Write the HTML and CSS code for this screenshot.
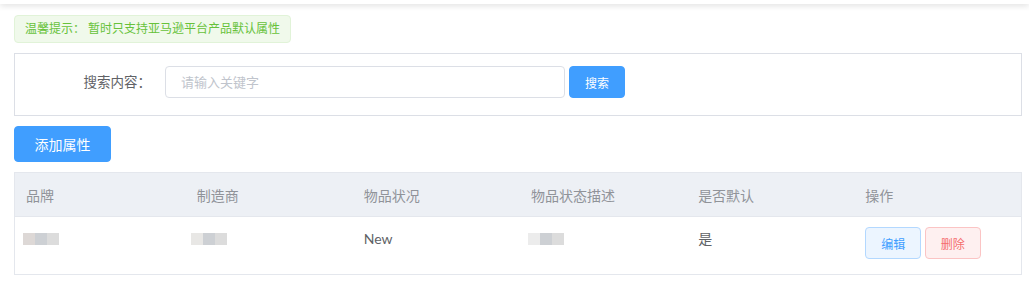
FILE: index.html
```html
<!DOCTYPE HTML>
<html>
<head>
  <meta name="viewport" content="width=device-width, initial-scale=1">
  <title>亚马逊产品默认属性</title>
  <link rel="stylesheet" href="styles.css">
</head>
<body>
  <div class="topbar"></div>

  <div class="page">
    <div class="alert">温馨提示：&nbsp;暂时只支持亚马逊平台产品默认属性</div>

    <div class="search-box">
      <label class="search-label">搜索内容：</label>
      <input class="search-input" type="text" placeholder="请输入关键字">
      <button class="btn btn-primary btn-small">搜索</button>
    </div>

    <button class="btn btn-primary btn-add">添加属性</button>

    <table class="attr-table">
      <thead>
        <tr>
          <th class="col-first">品牌</th>
          <th>制造商</th>
          <th>物品状况</th>
          <th>物品状态描述</th>
          <th>是否默认</th>
          <th>操作</th>
        </tr>
      </thead>
      <tbody>
        <tr>
          <td class="col-first"><span class="masked"><i class="m1"></i><i class="m2"></i><i class="m3"></i></span></td>
          <td><span class="masked shift"><i class="m4"></i><i class="m2"></i><i class="m3"></i></span></td>
          <td>New</td>
          <td><span class="masked"><i class="m5"></i><i class="m2"></i><i class="m3"></i></span></td>
          <td>是</td>
          <td>
            <button class="btn btn-mini btn-edit">编辑</button>
            <button class="btn btn-mini btn-delete">删除</button>
          </td>
        </tr>
      </tbody>
    </table>
  </div>
</body>
</html>
```

FILE: styles.css
```css
body {
  margin: 0;
  font-family: Lato, "Noto Sans CJK SC", sans-serif;
  font-size: 14px;
  color: #606266;
  background-color: #fff;
}

.topbar {
  height: 4px;
  background-color: #fff;
  box-shadow: 0 1px 6px rgba(0,0,0,0.18);
}

.page {
  padding: 11px 7px 0 14px;
}

.alert {
  display: inline-block;
  height: 26px;
  line-height: 26px;
  padding: 0 10px;
  font-size: 12px;
  color: #67c23a;
  background-color: #f0f9eb;
  border: 1px solid #e1f3d8;
  border-radius: 4px;
}

.search-box {
  display: flex;
  align-items: flex-start;
  box-sizing: border-box;
  height: 63px;
  padding-top: 12px;
  margin-top: 10px;
  border: 1px solid #dcdfe6;
}

.search-label {
  width: 136px;
  line-height: 32px;
  padding-right: 14px;
  text-align: right;
  font-size: 13.5px;
  color: #606266;
}

.search-input {
  box-sizing: border-box;
  width: 400px;
  height: 32px;
  padding: 0 15px;
  font-family: inherit;
  font-size: 13px;
  color: #606266;
  border: 1px solid #dcdfe6;
  border-radius: 4px;
  outline: none;
}

.search-input::placeholder {
  color: #c0c4cc;
}

.btn {
  font-family: inherit;
  border-radius: 4px;
  cursor: pointer;
  border: 1px solid transparent;
}

.btn-primary {
  color: #fff;
  background-color: #409eff;
  border-color: #409eff;
}

.btn-small {
  width: 56px;
  height: 32px;
  margin-left: 4px;
  font-size: 12px;
  padding: 0;
}

.btn-add {
  display: block;
  width: 97px;
  height: 36px;
  margin-top: 10px;
  font-size: 14px;
  padding: 0;
}

.attr-table {
  width: 1008px;
  margin-top: 10px;
  border-collapse: collapse;
  border: 1px solid #e4e7ed;
  table-layout: fixed;
}

.attr-table th,
.attr-table td {
  width: 167px;
  padding: 0 0 0 11px;
  text-align: left;
  box-sizing: border-box;
}

.attr-table th.col-first,
.attr-table td.col-first {
  width: 171px;
}

.attr-table th {
  height: 44px;
  font-weight: normal;
  color: #909399;
  background-color: #edf0f5;
  border-bottom: 1px solid #e4e7ed;
}

.attr-table td {
  height: 58px;
  padding-top: 10px;
  vertical-align: top;
  line-height: 24px;
  color: #606266;
}

.masked {
  display: inline-flex;
  margin-left: -3px;
  vertical-align: -1px;
}

.masked.shift {
  margin-left: -6px;
}

.masked i {
  display: block;
  width: 12px;
  height: 12px;
}

.masked .m1 { background-color: #ddd8d6; }
.masked .m2 { background-color: #cdd0d4; }
.masked .m3 { background-color: #dcdcdc; }
.masked .m4 { background-color: #e8e7e5; }
.masked .m5 { background-color: #ececec; }

.btn-mini {
  width: 56px;
  height: 32px;
  padding: 0;
  font-size: 12px;
  vertical-align: top;
}

.btn-edit {
  color: #409eff;
  background-color: #ecf5ff;
  border-color: #b3d8ff;
}

.btn-delete {
  color: #f56c6c;
  background-color: #fef0f0;
  border-color: #fbc4c4;
}
```
